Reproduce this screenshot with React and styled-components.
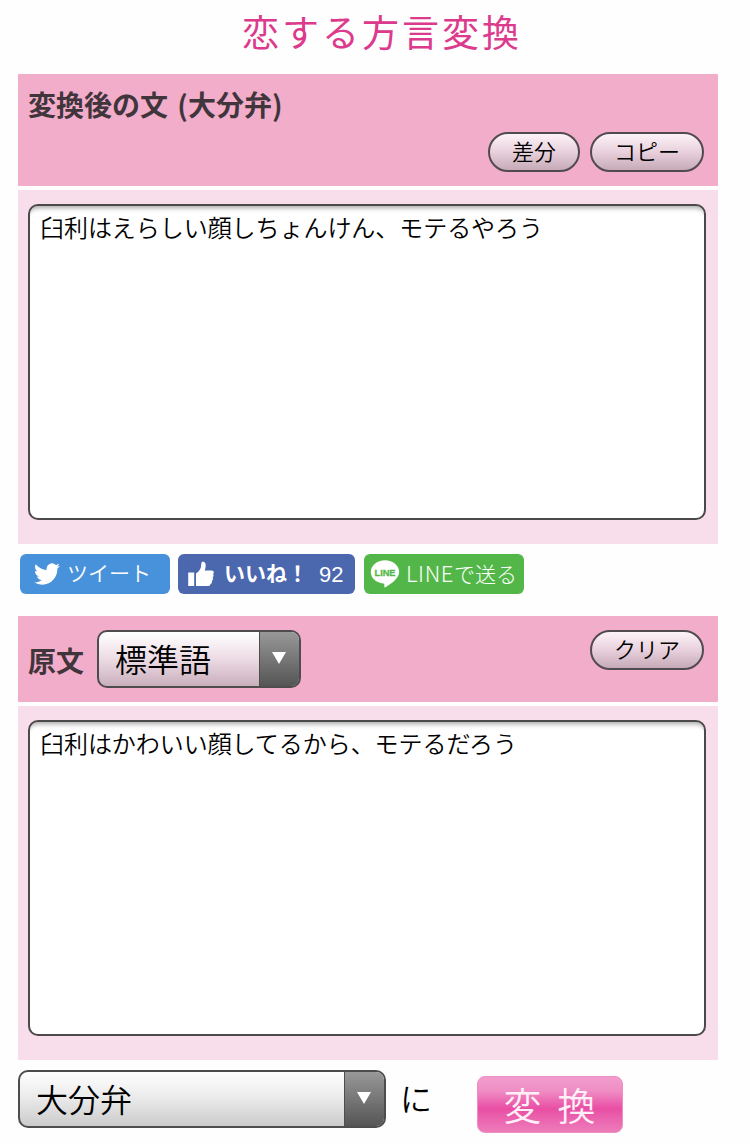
import styled, { createGlobalStyle } from 'styled-components'

const GlobalStyle = createGlobalStyle`
  * {
    box-sizing: border-box;
  }

  body {
    margin: 0;
    background: #fefefe;
    color: #000;
    font-family: 'Noto Sans CJK JP', sans-serif;
    font-weight: 350;
  }

  button,
  textarea {
    margin: 0;
    font: inherit;
    color: inherit;
  }
`

const Page = styled.main`
  width: 750px;
  height: 1144px;
  padding: 0 32px 0 18px;
  overflow: hidden;
`

const Title = styled.h1`
  height: 74px;
  margin: 0;
  padding-left: 224px;
  font-size: 37px;
  font-weight: 400;
  line-height: 62px;
  letter-spacing: 3px;
  color: #dc3a8c;
`

const PanelHeader = styled.header`
  display: flex;
  justify-content: space-between;
  align-items: flex-start;
  height: ${({ $height }) => $height}px;
  margin-bottom: 4px;
  padding: 14px 14px 14px 10px;
  background: #f2adca;
`

const Heading = styled.h2`
  margin: 0;
  font-size: 28px;
  font-weight: 700;
  line-height: 32px;
  word-spacing: 3px;
  color: #41353c;
`

const Field = styled.label`
  display: flex;
  align-items: center;
  gap: 13px;
  height: 58px;

  h2 {
    padding-top: 2px;
  }
`

const ButtonGroup = styled.div`
  display: flex;
  gap: 10px;
  align-self: ${({ $end }) => ($end ? 'flex-end' : 'flex-start')};
`

const PillButton = styled.button`
  width: ${({ $width }) => $width}px;
  height: 40px;
  padding: 0 0 4px;
  border: 2px solid #514a4e;
  border-radius: 20px;
  background: linear-gradient(#fdf3f8, #e8d0dc 50%, #c6aab7);
  font-size: 22px;
  line-height: 32px;
  color: #000;
`

const PanelBody = styled.div`
  height: 354px;
  padding: 14px 12px 24px 10px;
  background: #f8ddeb;
`

const TextArea = styled.textarea`
  display: block;
  width: 100%;
  height: 316px;
  padding: 3px 10px;
  border: 2px solid #4c494b;
  border-radius: 10px;
  outline: none;
  resize: none;
  background: #fff;
  box-shadow: inset 0 7px 5px -5px rgba(0, 0, 0, 0.35);
  font-size: 24px;
  line-height: 36px;
  letter-spacing: -0.05px;
`

const SocialRow = styled.div`
  display: flex;
  gap: 8px;
  height: 72px;
  padding: 10px 2px 0;
`

const SocialButton = styled.a`
  display: flex;
  align-items: center;
  width: ${({ $width }) => $width}px;
  height: 40px;
  padding-left: ${({ $pad }) => $pad}px;
  border-radius: 6px;
  background: ${({ $color }) => $color};
  font-size: 21px;
  line-height: 36px;
  white-space: nowrap;
  color: #fff;

  svg {
    flex: none;
    margin-right: ${({ $gap }) => $gap}px;
  }
`

const ShareText = styled.span`
  padding-bottom: 4px;
`

const LikeText = styled(ShareText)`
  font-weight: 700;
`

const CountText = styled.span`
  margin-left: 11px;
  padding-top: 2px;
  font-family: 'Liberation Sans', sans-serif;
  font-size: 22px;
`

const LineText = styled(ShareText)`
  font-weight: 300;

  b {
    font-size: 22px;
    font-weight: 300;
    letter-spacing: 0.6px;
  }
`

const LineButton = styled(SocialButton)`
  margin-left: 1px;
`

const SelectBox = styled.div`
  display: flex;
  width: ${({ $width }) => $width}px;
  height: 58px;
  border: 2px solid #4f4c4e;
  border-radius: 10px;
  overflow: hidden;
  background: ${({ $tint }) =>
    $tint
      ? 'linear-gradient(#fff, #ecdbe4 50%, #c9afbc)'
      : 'linear-gradient(#fff, #e9e9e9 50%, #cbcbcb)'};
  font-size: 32px;
  line-height: 53px;
  color: #000;
`

const SelectValue = styled.span`
  flex: 1;
  padding-left: 16px;
`

const SelectArrow = styled.span`
  display: flex;
  align-items: center;
  justify-content: center;
  width: 40px;
  border-left: 1px solid #4f4c4e;
  background: linear-gradient(#989898, #555);

  svg {
    margin: 0 2px 2px 0;
  }
`

const ConvertRow = styled.div`
  display: flex;
  align-items: flex-start;
  padding-top: 10px;
`

const Particle = styled.span`
  width: 91px;
  padding-left: 14px;
  font-size: 32px;
  line-height: 54px;
`

const ConvertButton = styled.button`
  width: 146px;
  height: 57px;
  margin-top: 6px;
  padding: 0 0 2px 15px;
  border: 1px solid #ee8fc3;
  border-radius: 8px;
  background: linear-gradient(#f19dcd, #ef8ec4 25%, #ec6cb3 42%, #e94ea4 58%, #ea5fac 72%, #ed7cba);
  font-size: 38px;
  line-height: 52px;
  letter-spacing: 16px;
  color: #fff0f8;
`

const TwitterIcon = () => (
  <svg width='26' height='22' viewBox='0 2 24 20' preserveAspectRatio='none' fill='#fff'>
    <path d='M23.95 4.57a10 10 0 0 1-2.82.77 4.96 4.96 0 0 0 2.16-2.72c-.95.55-2 .95-3.13 1.18a4.92 4.92 0 0 0-8.38 4.48C7.69 8.1 4.07 6.13 1.64 3.16a4.92 4.92 0 0 0 1.52 6.57 4.9 4.9 0 0 1-2.23-.61v.06a4.93 4.93 0 0 0 3.95 4.83 5 5 0 0 1-2.21.08 4.94 4.94 0 0 0 4.6 3.42A9.87 9.87 0 0 1 0 19.54a13.99 13.99 0 0 0 7.55 2.21c9.05 0 14-7.5 14-13.98 0-.21 0-.42-.02-.63a9.94 9.94 0 0 0 2.42-2.57z' />
  </svg>
)

const ThumbIcon = () => (
  <svg width='26' height='26' viewBox='0 0 26 26' fill='#fff'>
    <path d='M.2 11.5h6V25H.2z' />
    <path d='M8 12.6c2.4-1.3 4.2-3.9 5-6.5L13.4 2c.1-1.6 3.2-1.9 4 .5.6 2.2.2 4.7-.8 7h7.2c2.2 0 2.6 2.5 1.2 3.5 1 1 .7 2.8-.4 3.5.8 1.2.2 2.8-.8 3.4.5 1.3-.1 2.9-1.3 3.2-.2 1.3-1 1.900-2.200 1.900H8z' />
  </svg>
)

const LineIcon = () => (
  <svg width='30' height='28' viewBox='0 0 30 28'>
    <path
      d='M15 .3C7 .3.8 5.500.8 12c0 5.700 4.800 10.500 12.500 11.500 1.200.3 1.200 1 1 3-.1 1 .5 1.100 1.400.6C19 25 29.200 19 29.200 12 29.200 5.500 23 .3 15 .3z'
      fill='#fff'
    />
    <text
      x='4.5'
      y='15.500'
      textLength='21'
      lengthAdjust='spacingAndGlyphs'
      fontFamily='Liberation Sans, sans-serif'
      fontSize='9.500'
      fontWeight='700'
      fill='#52b748'
      stroke='#52b748'
      strokeWidth='0.3'
    >
      LINE
    </text>
  </svg>
)

const Select = ({ value, width, tint }) => (
  <SelectBox $width={width} $tint={tint}>
    <SelectValue>{value}</SelectValue>
    <SelectArrow>
      <svg width='14' height='12' viewBox='0 0 14 12'>
        <path d='M0 0h14L7 12z' fill='#fff' />
      </svg>
    </SelectArrow>
  </SelectBox>
)

export default function App() {
  return (
    <>
      <GlobalStyle />
      <Page>
        <Title>恋する方言変換</Title>

        {/* Converted text */}
        <section>
          <PanelHeader $height={112}>
            <Heading>変換後の文 (大分弁)</Heading>
            <ButtonGroup $end>
              <PillButton $width={92}>差分</PillButton>
              <PillButton $width={114}>コピー</PillButton>
            </ButtonGroup>
          </PanelHeader>
          <PanelBody>
            <TextArea
              spellCheck={false}
              defaultValue='臼利はえらしい顔しちょんけん、モテるやろう'
            />
          </PanelBody>
        </section>

        <SocialRow>
          <SocialButton $width={150} $pad={14} $gap={7} $color='#4892db'>
            <TwitterIcon />
            <ShareText>ツイート</ShareText>
          </SocialButton>
          <SocialButton $width={177} $pad={10} $gap={10} $color='#4b67ad'>
            <ThumbIcon />
            <LikeText>いいね！</LikeText>
            <CountText>92</CountText>
          </SocialButton>
          <LineButton $width={160} $pad={6} $gap={6} $color='#52b748'>
            <LineIcon />
            <LineText>
              <b>LINE</b>で送る
            </LineText>
          </LineButton>
        </SocialRow>

        {/* Original text */}
        <section>
          <PanelHeader $height={86}>
            <Field>
              <Heading>原文</Heading>
              <Select value='標準語' width={204} tint />
            </Field>
            <ButtonGroup>
              <PillButton $width={114}>クリア</PillButton>
            </ButtonGroup>
          </PanelHeader>
          <PanelBody>
            <TextArea
              spellCheck={false}
              defaultValue='臼利はかわいい顔してるから、モテるだろう'
            />
          </PanelBody>
        </section>

        <ConvertRow>
          <Select value='大分弁' width={368} />
          <Particle>に</Particle>
          <ConvertButton>変換</ConvertButton>
        </ConvertRow>
      </Page>
    </>
  )
}
